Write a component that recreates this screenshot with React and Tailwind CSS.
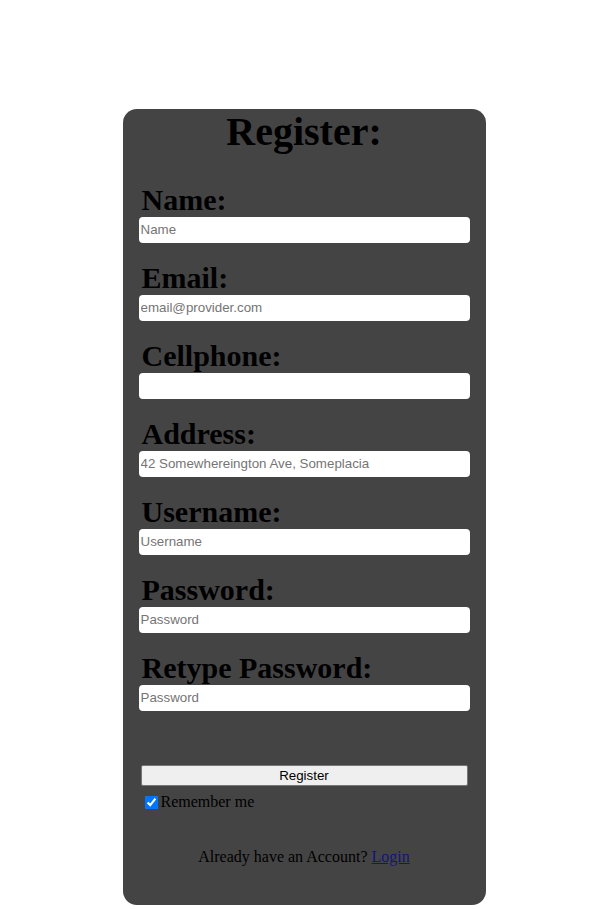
export default function App() {
  const fields = [
    { label: 'Name:', placeholder: 'Name', type: 'text' },
    { label: 'Email:', placeholder: 'email@provider.com', type: 'email' },
    { label: 'Cellphone:', placeholder: '', type: 'tel' },
    { label: 'Address:', placeholder: '42 Somewhereington Ave, Someplacia', type: 'text' },
    { label: 'Username:', placeholder: 'Username', type: 'text' },
    { label: 'Password:', placeholder: 'Password', type: 'password' },
    { label: 'Retype Password:', placeholder: 'Password', type: 'password' },
  ]

  return (
    <div className="min-h-[909px] bg-white pt-[109px] font-['Liberation_Serif',serif] text-black">
      <div className="mx-auto flex h-[796px] w-[363px] flex-col rounded-[14px] bg-[#444444] px-4">
        <h1 className="text-center text-[40px] font-bold leading-[46px]">Register:</h1>

        <div className="mt-[28px] flex flex-col gap-[18px]">
          {fields.map((f) => (
            <div key={f.label} className="flex flex-col">
              <label className="pl-[3px] text-[30px] font-bold leading-[34px]">{f.label}</label>
              <input
                type={f.type}
                placeholder={f.placeholder}
                className="h-[26px] w-full rounded-[4px] bg-white pb-[2px] pl-[2px] pr-[2px] font-['Liberation_Sans',Arial,sans-serif] text-[13.33px] text-black outline-none placeholder:text-[#757575]"
              />
            </div>
          ))}
        </div>

        <button
          type="button"
          className="mx-[2px] mt-[54px] h-[21px] rounded-[2px] border border-[#767676] bg-[#efefef] font-['Liberation_Sans',Arial,sans-serif] text-[13.33px] leading-none text-black"
        >
          Register
        </button>

        <div className="mt-[7px] flex items-center">
          <input type="checkbox" defaultChecked className="ml-[6px] mr-[3px] h-[13px] w-[13px] accent-[#0075ff]" />
          <span className="text-[16px] leading-[18px]">Remember me</span>
        </div>

        <p className="mt-[37px] text-center text-[16px] leading-[18px]">
          Already have an Account?{' '}
          <a href="#" className="text-[#14147a] underline">
            Login
          </a>
        </p>
      </div>
    </div>
  )
}
